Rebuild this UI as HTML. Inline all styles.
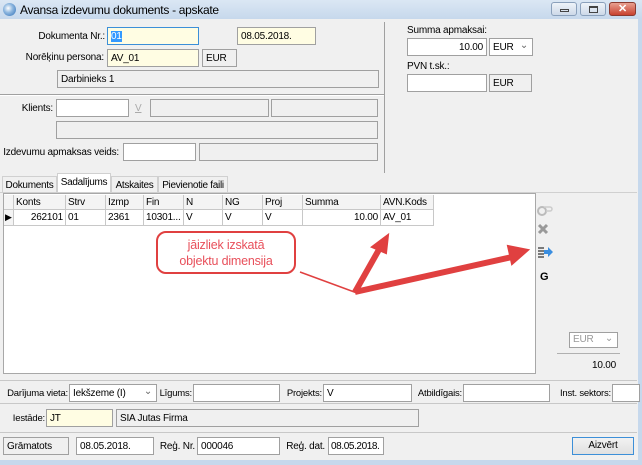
<!DOCTYPE html>
<html><head><meta charset="utf-8"><style>
*{box-sizing:border-box;margin:0;padding:0}
body{width:642px;height:465px;overflow:hidden;background:#f0f0f0;font-family:"Liberation Sans",sans-serif;font-size:10px;letter-spacing:-0.2px;color:#000;position:relative}
.a{position:absolute}
.in{position:absolute;border:1px solid #a0a0a0;background:#fff;height:18px;padding:3px 3px;white-space:nowrap;overflow:hidden;font-size:10px}
.y{background:#fffde3}
.g{background:#f0f0f0}
.lbl{position:absolute;white-space:nowrap}
.r{text-align:right}
.hl{position:absolute;height:1px;background:#c8c8c8}
.cell{position:absolute;border-right:1px solid #c8c8c8;border-bottom:1px solid #c8c8c8;padding:2px 2px;white-space:nowrap;overflow:hidden;font-size:10px}
.tab{position:absolute;top:176px;height:17px;border:1px solid #d0d0d0;border-bottom:none;background:#f0f0f0;padding:3px 0;text-align:center;font-size:10px;letter-spacing:-0.3px}
</style></head><body>
<div class="a" style="left:0;top:0;width:642px;height:19px;background:linear-gradient(#dbe7f4,#c6d8ec)"></div>
<div class="a" style="left:3px;top:3px;width:13px;height:13px;border-radius:50%;background:radial-gradient(circle at 40% 40%,#fff 0,#8fb8e0 40%,#2c6db5 100%)"></div>
<div class="lbl" style="left:20px;top:3px;font-size:12px;letter-spacing:-0.3px">Avansa izdevumu dokuments - apskate</div>
<div class="a" style="left:551px;top:2px;width:26px;height:14px;border:1px solid #8aa0bb;border-radius:3px;background:linear-gradient(#eef3f9,#cdd9e8)"><div class="a" style="left:8px;top:6px;width:9px;height:3px;border:1px solid #444"></div></div>
<div class="a" style="left:580px;top:2px;width:26px;height:14px;border:1px solid #8aa0bb;border-radius:3px;background:linear-gradient(#eef3f9,#cdd9e8)"><div class="a" style="left:8px;top:3px;width:9px;height:7px;border:1px solid #444;border-top-width:2px"></div></div>
<div class="a" style="left:609px;top:2px;width:27px;height:14px;border:1px solid #8a3a30;border-radius:3px;background:linear-gradient(#e8a090,#c8412f);color:#fff;font-weight:bold;font-size:11px;text-align:center;line-height:12px">✕</div>
<div class="a" style="left:638px;top:19px;width:4px;height:446px;background:#c6d8ec"></div>
<div class="a" style="left:0;top:460px;width:642px;height:5px;background:#c6d8ec"></div>

<div class="lbl r" style="right:537px;top:31px">Dokumenta Nr.:</div>
<div class="in y" style="left:107px;top:27px;width:92px;border-color:#3c8fd8"><span style="background:#3399ff;color:#fff">01</span></div>
<div class="in y" style="left:237px;top:27px;width:79px">08.05.2018.</div>
<div class="lbl r" style="right:538px;top:52px">Norēķinu persona:</div>
<div class="in y" style="left:107px;top:49px;width:92px">AV_01</div>
<div class="in g" style="left:202px;top:49px;width:35px">EUR</div>
<div class="in g" style="left:57px;top:70px;width:322px">Darbinieks 1</div>
<div class="hl" style="left:0;top:94px;width:385px;background:#a0a0a0"></div>
<div class="hl" style="left:0;top:95px;width:385px;background:#fff"></div>
<div class="a" style="left:384px;top:22px;width:1px;height:151px;background:#a0a0a0"></div>
<div class="lbl r" style="right:589px;top:103px">Klients:</div>
<div class="in" style="left:56px;top:99px;width:73px"></div>
<div class="lbl" style="left:135px;top:103px;color:#aaa;text-decoration:underline">V</div>
<div class="in g" style="left:150px;top:99px;width:119px"></div>
<div class="in g" style="left:271px;top:99px;width:107px"></div>
<div class="in g" style="left:56px;top:121px;width:322px"></div>
<div class="lbl r" style="right:523px;top:147px">Izdevumu apmaksas veids:</div>
<div class="in" style="left:123px;top:143px;width:73px"></div>
<div class="in g" style="left:199px;top:143px;width:179px"></div>

<div class="lbl" style="left:407px;top:25px">Summa apmaksai:</div>
<div class="in" style="left:407px;top:38px;width:80px;text-align:right">10.00</div>
<div class="in" style="left:489px;top:38px;width:44px">EUR <span style="position:absolute;right:4px;top:1px;color:#666">⌄</span></div>
<div class="lbl" style="left:407px;top:61px">PVN t.sk.:</div>
<div class="in" style="left:407px;top:74px;width:80px"></div>
<div class="in g" style="left:489px;top:74px;width:43px">EUR</div>

<div class="tab" style="left:2px;width:55px">Dokuments</div>
<div class="tab" style="left:57px;top:173px;height:20px;width:54px;background:#fff">Sadalījums</div>
<div class="tab" style="left:111px;width:47px">Atskaites</div>
<div class="tab" style="left:158px;width:70px">Pievienotie faili</div>
<div class="hl" style="left:0;top:192px;width:637px;background:#d0d0d0"></div>

<div class="a" style="left:3px;top:193px;width:533px;height:181px;background:#fff;border:1px solid #a8a8a8"></div>
<div class="cell" style="left:4px;top:195px;width:10px;height:15px;background:#f4f4f4"></div>
<div class="cell" style="left:14px;top:195px;width:52px;height:15px;background:#f4f4f4">Konts</div>
<div class="cell" style="left:66px;top:195px;width:40px;height:15px;background:#f4f4f4">Strv</div>
<div class="cell" style="left:106px;top:195px;width:38px;height:15px;background:#f4f4f4">Izmp</div>
<div class="cell" style="left:144px;top:195px;width:40px;height:15px;background:#f4f4f4">Fin</div>
<div class="cell" style="left:184px;top:195px;width:39px;height:15px;background:#f4f4f4">N</div>
<div class="cell" style="left:223px;top:195px;width:40px;height:15px;background:#f4f4f4">NG</div>
<div class="cell" style="left:263px;top:195px;width:40px;height:15px;background:#f4f4f4">Proj</div>
<div class="cell" style="left:303px;top:195px;width:78px;height:15px;background:#f4f4f4">Summa</div>
<div class="cell" style="left:381px;top:195px;width:53px;height:15px;background:#f4f4f4">AVN.Kods</div>
<div class="cell" style="left:4px;top:210px;width:10px;height:16px;background:#f4f4f4;font-size:9px;padding:2px 1px">▶</div>
<div class="cell" style="left:14px;top:210px;width:52px;height:16px;text-align:right">262101</div>
<div class="cell" style="left:66px;top:210px;width:40px;height:16px">01</div>
<div class="cell" style="left:106px;top:210px;width:38px;height:16px">2361</div>
<div class="cell" style="left:144px;top:210px;width:40px;height:16px">10301...</div>
<div class="cell" style="left:184px;top:210px;width:39px;height:16px">V</div>
<div class="cell" style="left:223px;top:210px;width:40px;height:16px">V</div>
<div class="cell" style="left:263px;top:210px;width:40px;height:16px">V</div>
<div class="cell" style="left:303px;top:210px;width:78px;height:16px;text-align:right">10.00</div>
<div class="cell" style="left:381px;top:210px;width:53px;height:16px">AV_01</div>

<svg class="a" style="left:535px;top:202px" width="20" height="82">
<circle cx="7" cy="9" r="4" fill="none" stroke="#bbb" stroke-width="2"/><path d="M9 5h6a2 2 0 0 1 0 4h-4" fill="none" stroke="#ccc" stroke-width="1.5"/>
<path d="M4 23l8 8M12 23l-8 8" stroke="#999" stroke-width="3"/>
<path d="M3 46h6M3 49h6M3 52h6M3 55h6" stroke="#333" stroke-width="1.2"/><path d="M9 48h4v-3l5 5-5 5v-3h-4z" fill="#3a8ee0"/>
<text x="5" y="78" font-family="Liberation Sans" font-weight="bold" font-size="11">G</text>
</svg>
<div class="in" style="left:569px;top:332px;width:49px;height:16px;padding:1px 3px;color:#999;font-size:10px">EUR <span style="position:absolute;right:4px;top:0">⌄</span></div>
<div class="hl" style="left:557px;top:353px;width:63px;background:#b0b0b0"></div>
<div class="lbl" style="left:592px;top:360px">10.00</div>

<svg class="a" style="left:0;top:0" width="642" height="465">
<path d="M300 272 L357 293" stroke="#e04040" stroke-width="1.5"/>
<path d="M355 292 L381 246" stroke="#e04040" stroke-width="6"/>
<path d="M388 235 L372 247 L386 253 Z" fill="#e04040" stroke="#e04040" stroke-width="2"/>
<path d="M355 292 L512 257" stroke="#e04040" stroke-width="6"/>
<path d="M528 250 L508 246 L512 264 Z" fill="#e04040" stroke="#e04040" stroke-width="2"/>
<rect x="157" y="232" width="138" height="41" rx="9" fill="#fff" stroke="#e04040" stroke-width="2"/>
<text x="226" y="249" text-anchor="middle" font-family="Liberation Sans" font-size="12.5" fill="#e8505b">jāizliek izskatā</text>
<text x="226" y="265" text-anchor="middle" font-family="Liberation Sans" font-size="12.5" fill="#e8505b">objektu dimensija</text>
</svg>

<div class="hl" style="left:0;top:380px;width:637px;background:#c8c8c8"></div>
<div class="lbl r" style="right:574px;top:388px;font-size:9.5px">Darījuma vieta:</div>
<div class="in" style="left:69px;top:384px;width:88px">Iekšzeme (I)<span style="position:absolute;right:4px;top:1px;color:#666">⌄</span></div>
<div class="lbl r" style="right:450px;top:388px;font-size:9.5px">Līgums:</div>
<div class="in" style="left:193px;top:384px;width:87px"></div>
<div class="lbl r" style="right:320px;top:388px;font-size:9.5px">Projekts:</div>
<div class="in" style="left:323px;top:384px;width:89px">V</div>
<div class="lbl r" style="right:180px;top:388px;font-size:9.5px">Atbildīgais:</div>
<div class="in" style="left:463px;top:384px;width:87px"></div>
<div class="lbl r" style="right:31px;top:388px;font-size:9.5px">Inst. sektors:</div>
<div class="in" style="left:612px;top:384px;width:28px"></div>
<div class="hl" style="left:0;top:403px;width:637px;background:#c8c8c8"></div>
<div class="lbl r" style="right:597px;top:413px;font-size:9.5px">Iestāde:</div>
<div class="in y" style="left:46px;top:409px;width:67px">JT</div>
<div class="in g" style="left:116px;top:409px;width:303px">SIA Jutas Firma</div>
<div class="hl" style="left:0;top:432px;width:637px;background:#c8c8c8"></div>
<div class="in g" style="left:3px;top:437px;width:66px">Grāmatots</div>
<div class="in" style="left:76px;top:437px;width:78px">08.05.2018.</div>
<div class="lbl r" style="right:447px;top:441px">Reģ. Nr.</div>
<div class="in" style="left:197px;top:437px;width:83px">000046</div>
<div class="lbl r" style="right:317px;top:441px">Reģ. dat.</div>
<div class="in" style="left:328px;top:437px;width:56px;padding:3px 2px;letter-spacing:-0.4px">08.05.2018.</div>
<div class="a" style="left:572px;top:437px;width:62px;height:18px;border:1px solid #3c8fd8;background:linear-gradient(#f2f2f2,#e0e0e0);text-align:center;line-height:16px">Aizvērt</div>
</body></html>
